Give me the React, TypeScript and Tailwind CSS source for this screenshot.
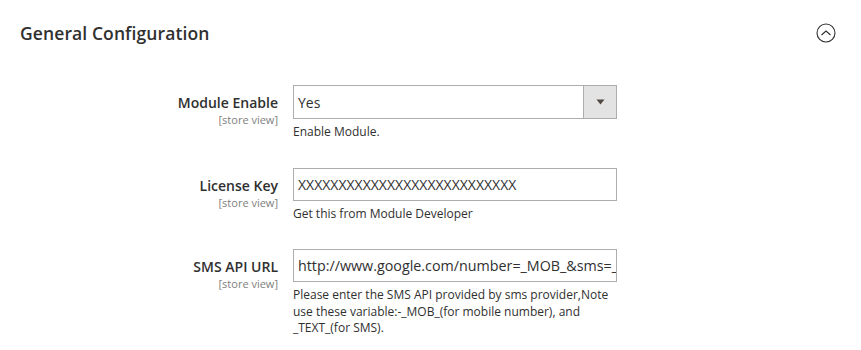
/* Store config — General Configuration fieldset (module enable, license key, SMS API URL). */
const font = { fontFamily: '"Open Sans", "Liberation Sans", sans-serif' };

export default function App() {
  return (
    <div className="h-[350px] w-[861px] overflow-hidden bg-white text-[#303030]" style={font}>
      {/* Section header */}
      <div className="flex h-[66px] items-center justify-between pl-[20px] pr-[25px]">
        <h2 className="text-[17.5px] font-semibold tracking-[0.1px] text-[#303030]">General Configuration</h2>
        <CollapseIcon />
      </div>

      <div className="mt-[19px] flex flex-col gap-[27px]">
        <Row label="Module Enable" note={["Enable Module."]}>
          <div className="flex h-[34px] w-[324px] border border-[#adadad] bg-white">
            <span className="flex-1 pl-[4px] text-[14px] leading-[33px]">Yes</span>
            <span className="flex w-[33px] items-center justify-center border-l border-[#adadad] bg-[#e3e3e3]">
              <svg width="9" height="6" viewBox="0 0 9 6">
                <path d="M0.5 0.5 H8.5 L4.5 5.5 Z" fill="#514943" />
              </svg>
            </span>
          </div>
        </Row>

        <Row label="License Key" note={["Get this from Module Developer"]}>
          <TextBox value="XXXXXXXXXXXXXXXXXXXXXXXXXXX" size="text-[14px]" />
        </Row>

        <Row
          label="SMS API URL"
          note={[
            "Please enter the SMS API provided by sms provider,Note",
            "use these variable:-_MOB_(for mobile number), and",
            "_TEXT_(for SMS).",
          ]}
        >
          <TextBox value="http://www.google.com/number=_MOB_&sms=_TEXT_" size="text-[14.3px]" />
        </Row>
      </div>
    </div>
  );
}

function Row({ label, note, children }: { label: string; note: string[]; children: React.ReactNode }) {
  return (
    <div className="grid grid-cols-[278px_324px] gap-x-[15px]">
      <div className="pt-[8px] text-right">
        <p className="text-[14px] font-semibold leading-[20px] text-[#303030]">{label}</p>
        <p className="text-[11px] leading-[13px] text-[#808080]">[store view]</p>
      </div>
      <div>
        {children}
        <div className="mt-[5px] text-[12px] leading-[16.5px] text-[#303030]">
          {note.map((n) => (
            <p key={n}>{n}</p>
          ))}
        </div>
      </div>
    </div>
  );
}

function TextBox({ value, size }: { value: string; size: string }) {
  return (
    <div
      className={`h-[33px] w-[324px] overflow-hidden whitespace-nowrap border border-[#adadad] bg-white pl-[4px] leading-[31px] text-[#303030] ${size}`}
    >
      {value}
    </div>
  );
}

function CollapseIcon() {
  return (
    <svg width="20" height="20" viewBox="0 0 20 20">
      <circle cx="10" cy="10" r="9" fill="none" stroke="#303030" strokeWidth="1.1" />
      <path d="M5.5 12 L10 8 L14.5 12" fill="none" stroke="#303030" strokeWidth="1.1" />
    </svg>
  );
}
